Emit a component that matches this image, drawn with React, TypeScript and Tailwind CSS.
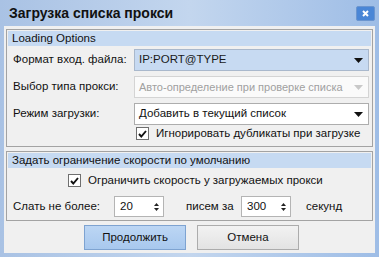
import { useState } from "react";

function Arrow({ disabled }: { disabled?: boolean }) {
  return (
    <div className="flex h-full w-[17px] shrink-0 items-center justify-center">
      <svg width="9" height="5" viewBox="0 0 9 5">
        <path d="M0 0h9L4.5 5z" fill={disabled ? "#c8c8c8" : "#111"} />
      </svg>
    </div>
  );
}

function Select({
  value,
  variant = "normal",
}: {
  value: string;
  variant?: "normal" | "active" | "disabled";
}) {
  const box =
    variant === "active"
      ? "bg-[#c7daf2] border-[#a9b8cc] text-[#1a1a1a]"
      : variant === "disabled"
        ? "bg-[#fafafa] border-[#d4d4d4] text-[#a0a0a0] text-[11px]"
        : "bg-white border-[#adadad] text-[#111]";
  return (
    <div
      className={`flex h-[22px] w-[235px] items-center border pl-[4px] pr-[1px] ${box}`}
    >
      <span className="flex-1 whitespace-nowrap">{value}</span>
      <Arrow disabled={variant === "disabled"} />
    </div>
  );
}

function Check({ label, checked }: { label: string; checked: boolean }) {
  return (
    <div className="flex h-[13px] items-center gap-[7px]">
      <div className="flex size-[13px] items-center justify-center border border-[#6f6f6f] bg-white">
        {checked && (
          <svg width="9" height="8" viewBox="0 0 9 8">
            <path
              d="M1 4l2.3 2.5L8 1"
              fill="none"
              stroke="#111"
              strokeWidth="1.9"
            />
          </svg>
        )}
      </div>
      <span>{label}</span>
    </div>
  );
}

function Spin({ value }: { value: string }) {
  return (
    <div className="flex h-[21px] w-[50px] items-center border border-[#b4b4b4] bg-white pl-[5px]">
      <span className="flex-1">{value}</span>
      <div className="flex w-[14px] flex-col items-center gap-[2px]">
        <svg width="5" height="3" viewBox="0 0 5 3">
          <path d="M0 3h5L2.5 0z" fill="#222" />
        </svg>
        <svg width="5" height="3" viewBox="0 0 5 3">
          <path d="M0 0h5L2.5 3z" fill="#222" />
        </svg>
      </div>
    </div>
  );
}

function Group({
  title,
  children,
  className,
}: {
  title: string;
  children: React.ReactNode;
  className?: string;
}) {
  return (
    <div className={`shrink-0 border border-[#a3a3a3] p-px ${className ?? ""}`}>
      <div className="flex h-[15px] items-center bg-[#c6daf2] pl-[4px] leading-none">
        {title}
      </div>
      {children}
    </div>
  );
}

export default function App() {
  const [hover] = useState(false);
  return (
    <div
      className="flex h-[257px] w-[379px] flex-col bg-gradient-to-r from-[#a9c2e4] via-[#c3d6ee] to-[#9ebde6] text-[11.5px] leading-none text-[#111]"
      style={{ fontFamily: '"Liberation Sans", Arial, sans-serif' }}
    >
      {/* title bar */}
      <div className="flex h-[26px] shrink-0 items-center pl-[9px] pr-[4px]">
        <span className="flex-1 text-[14px] font-bold text-[#111]">
          Загрузка списка прокси
        </span>
        <div
          className={`flex h-[15px] w-[19px] items-center justify-center rounded-[2px] border border-[#6b95cf] ${hover ? "bg-[#2f6cc8]" : "bg-[#4a86d6]"}`}
        >
          <svg width="7" height="7" viewBox="0 0 7 7">
            <path d="M1 1l5 5M6 1L1 6" stroke="#fff" strokeWidth="2" />
          </svg>
        </div>
      </div>

      {/* body */}
      <div className="mx-[4px] mb-[4px] flex flex-1 flex-col bg-[#f0f0f0] px-[2px] pt-[3px]">
        <Group title="Loading Options" className="h-[118px]">
          <div className="flex flex-col gap-[5px] pl-[5px] pt-[3px]">
            <div className="flex h-[22px] items-center">
              <span className="w-[121px]">Формат вход. файла:</span>
              <Select value="IP:PORT@TYPE" variant="active" />
            </div>
            <div className="flex h-[22px] items-center">
              <span className="w-[121px]">Выбор типа прокси:</span>
              <Select
                value="Авто-определение при проверке списка"
                variant="disabled"
              />
            </div>
            <div className="flex h-[22px] items-center">
              <span className="w-[121px]">Режим загрузки:</span>
              <Select value="Добавить в текущий список" />
            </div>
            <div className="-mt-[3px] flex items-center pl-[123px]">
              <Check label="Игнорировать дубликаты при загрузке" checked />
            </div>
          </div>
        </Group>

        <Group
          title="Задать ограничение скорости по умолчанию"
          className="mt-[4px] h-[70px]"
        >
          <div className="flex flex-col gap-[9px] pt-[6px]">
            <div className="pl-[60px]">
              <Check label="Ограничить скорость у загружаемых прокси" checked />
            </div>
            <div className="flex h-[21px] items-center pl-[5px]">
              <span className="w-[101px]">Слать не более:</span>
              <Spin value="20" />
              <span className="ml-[22px] w-[55px]">писем за</span>
              <Spin value="300" />
              <span className="ml-[15px]">секунд</span>
            </div>
          </div>
        </Group>

        <div className="mt-[4px] flex justify-center gap-[11px] pl-[4px]">
          <button className="h-[25px] w-[102px] border border-[#7ea3d1] bg-gradient-to-b from-[#bcd6f4] to-[#a8c8ee]">
            Продолжить
          </button>
          <button className="h-[25px] w-[102px] border border-[#acacac] bg-gradient-to-b from-[#f2f2f2] to-[#e3e3e3]">
            Отмена
          </button>
        </div>
      </div>
    </div>
  );
}
